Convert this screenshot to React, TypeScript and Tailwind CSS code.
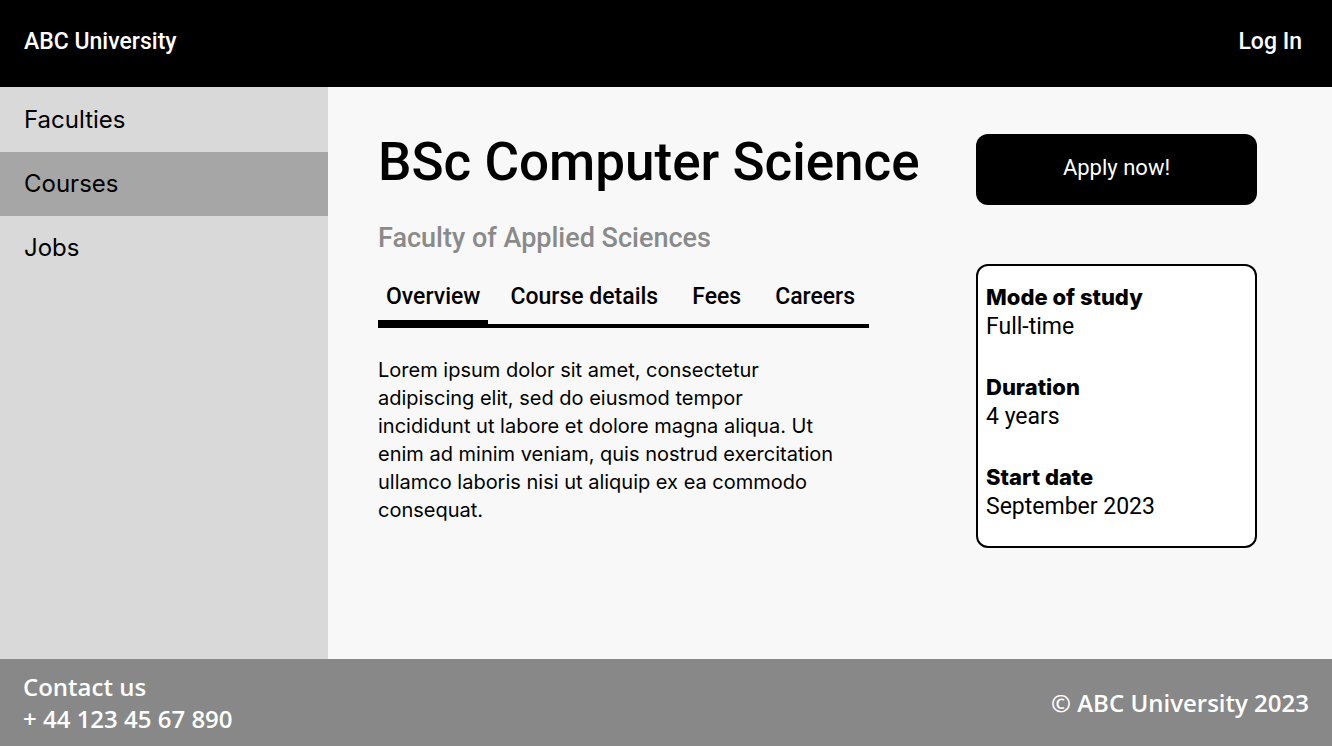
const navItems = [
  { label: "Faculties", href: "#faculties" },
  { label: "Courses", href: "#courses", current: true },
  { label: "Jobs", href: "#jobs" },
];

const facts = [
  { term: "Mode of study", value: "Full-time" },
  { term: "Duration", value: "4 years" },
  { term: "Start date", value: "September 2023" },
];

function Header() {
  return (
    <header className="flex h-[87px] items-center justify-between bg-black pr-[30px] pb-1 pl-6 text-[23px] leading-8 font-medium text-white">
      <a href="#home">ABC University</a>
      <a href="#login">Log In</a>
    </header>
  );
}

function Sidebar() {
  return (
    <nav aria-label="Main" className="w-[328px] shrink-0 bg-[#d9d9d9] pt-px font-['Inter',sans-serif] text-2xl">
      <ul>
        {navItems.map((item) => (
          <li key={item.label}>
            <a
              href={item.href}
              aria-current={item.current ? "page" : undefined}
              className={
                item.current
                  ? "flex h-16 items-center bg-[#a6a6a6] px-6"
                  : "flex h-16 items-center px-6"
              }
            >
              {item.label}
            </a>
          </li>
        ))}
      </ul>
    </nav>
  );
}

function Tabs() {
  return (
    <div role="tablist" className="mt-5 flex h-[54px] gap-[22px] border-b-4 border-black text-[23px] font-medium whitespace-nowrap">
      <button role="tab" aria-selected="true" className="border-b-4 border-black px-2">
        Overview
      </button>
      <button role="tab" aria-selected="false" className="pr-3 pb-1">
        Course details
      </button>
      <button role="tab" aria-selected="false" className="pr-3 pb-1">
        Fees
      </button>
      <button role="tab" aria-selected="false" className="pb-1">
        Careers
      </button>
    </div>
  );
}

export default function App() {
  return (
    <div className="flex min-h-screen flex-col bg-[#f8f8f8] font-['Roboto',sans-serif] text-black">
      <Header />
      <div className="flex grow">
        <Sidebar />
        <main className="flex grow items-start justify-between gap-12 pt-[47px] pr-[75px] pb-12 pl-[50px]">
          <article>
            <h1 className="text-[53px] leading-[56px] font-medium whitespace-nowrap">BSc Computer Science</h1>
            <p className="mt-8 text-[27px] leading-8 font-medium text-[#8a8a8a]">Faculty of Applied Sciences</p>
            <div className="max-w-[491px]">
              <Tabs />
              <p className="mt-7 font-['Inter',sans-serif] text-xl leading-7">
                Lorem ipsum dolor sit amet, consectetur
                <br />
                adipiscing elit, sed do eiusmod tempor
                <br />
                incididunt ut labore et dolore magna aliqua. Ut
                <br />
                enim ad minim veniam, quis nostrud exercitation
                <br />
                ullamco laboris nisi ut aliquip ex ea commodo
                <br />
                consequat.
              </p>
            </div>
          </article>
          <aside className="w-[281px] shrink-0">
            <button className="h-[71px] w-full rounded-xl bg-black pb-1 text-[22px] text-white">
              Apply now!
            </button>
            <dl className="mt-[59px] flex flex-col gap-[30px] rounded-xl border-2 border-black bg-white px-2 pt-4 pb-6 text-[23px] leading-[30px]">
              {facts.map((fact) => (
                <div key={fact.term}>
                  <dt className="font-['Inter',sans-serif] text-[22px] leading-[30px] font-extrabold">{fact.term}</dt>
                  <dd>{fact.value}</dd>
                </div>
              ))}
            </dl>
          </aside>
        </main>
      </div>
      <footer className="flex h-[87px] items-center justify-between bg-[#888888] px-[23px] font-['Open_Sans',sans-serif] text-2xl font-semibold text-white">
        <address className="leading-8 not-italic">
          Contact us
          <br />
          <a href="tel:+441234567890">+ 44 123 45 67 890</a>
        </address>
        <p>© ABC University 2023</p>
      </footer>
    </div>
  );
}
